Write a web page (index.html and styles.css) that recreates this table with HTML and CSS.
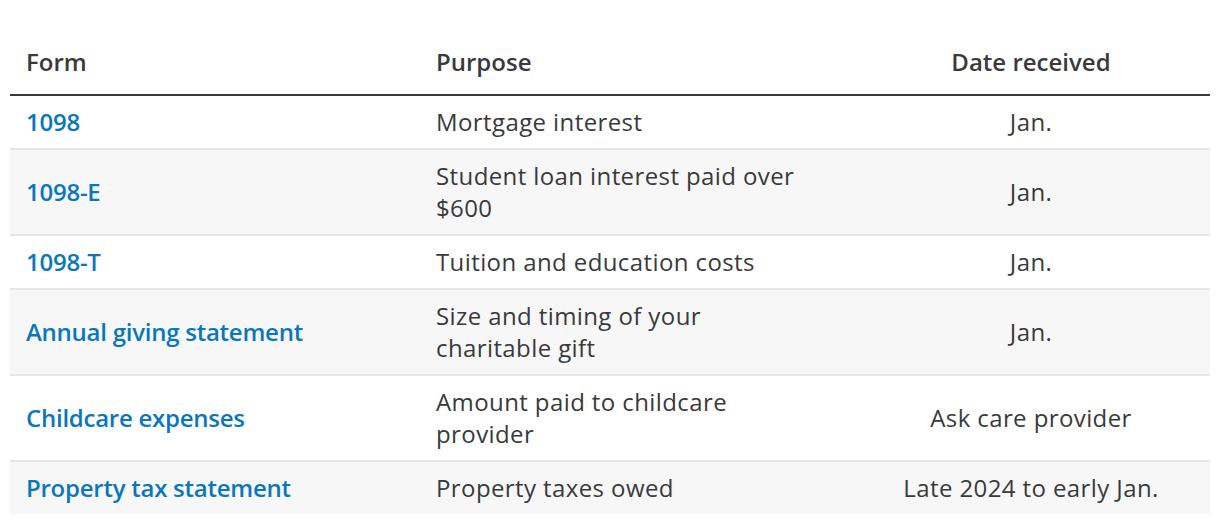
FILE: index.html
```html
<!DOCTYPE html>
<html lang="en">
<head>
<meta charset="utf-8">
<title>Tax forms</title>
<link rel="stylesheet" href="styles.css">
</head>
<body>
<div class="wrap">
  <table class="forms">
    <colgroup>
      <col class="c-form">
      <col class="c-purpose">
      <col class="c-date">
    </colgroup>
    <thead>
      <tr>
        <th class="t-form">Form</th>
        <th class="t-purpose">Purpose</th>
        <th class="t-date">Date received</th>
      </tr>
    </thead>
    <tbody>
      <tr>
        <td class="t-form"><a href="#">1098</a></td>
        <td class="t-purpose">Mortgage interest</td>
        <td class="t-date">Jan.</td>
      </tr>
      <tr>
        <td class="t-form"><a href="#">1098-E</a></td>
        <td class="t-purpose">Student loan interest paid over $600</td>
        <td class="t-date">Jan.</td>
      </tr>
      <tr>
        <td class="t-form"><a href="#">1098-T</a></td>
        <td class="t-purpose">Tuition and education costs</td>
        <td class="t-date">Jan.</td>
      </tr>
      <tr>
        <td class="t-form"><a href="#">Annual giving statement</a></td>
        <td class="t-purpose">Size and timing of your charitable gift</td>
        <td class="t-date">Jan.</td>
      </tr>
      <tr>
        <td class="t-form"><a href="#">Childcare expenses</a></td>
        <td class="t-purpose">Amount paid to childcare provider</td>
        <td class="t-date">Ask care provider</td>
      </tr>
      <tr>
        <td class="t-form"><a href="#">Property tax statement</a></td>
        <td class="t-purpose">Property taxes owed</td>
        <td class="t-date">Late 2024 to early Jan.</td>
      </tr>
    </tbody>
  </table>
</div>
</body>
</html>
```

FILE: styles.css
```css
html, body {
  margin: 0;
  padding: 0;
  background: #ffffff;
}

body {
  font-family: "Open Sans", "Liberation Sans", sans-serif;
  color: #393a3d;
}

.wrap {
  padding: 30px 10px 0 10px;
}

.forms {
  width: 1200px;
  border-collapse: collapse;
  table-layout: fixed;
  font-size: 24px;
  line-height: 32px;
  letter-spacing: 0.4px;
}

.c-form { width: 410px; }
.c-purpose { width: 432px; }
.c-date { width: 358px; }

.forms th {
  font-weight: 600;
  letter-spacing: 0;
  text-align: left;
  padding: 16px 16px;
  border-bottom: 2px solid #393a3d;
}

.forms td {
  padding: 10px 16px;
  vertical-align: middle;
  border-bottom: 2px solid #e6e6e6;
}

.forms tbody tr:nth-child(even) td {
  background: #f7f7f7;
}

.forms tbody tr:last-child td {
  border-bottom: none;
}

.forms .t-purpose {
  padding-right: 40px;
}

.forms .t-date {
  text-align: center;
}

.forms a {
  color: #0a77bd;
  font-weight: 600;
  letter-spacing: -0.25px;
  text-decoration: none;
}
```
